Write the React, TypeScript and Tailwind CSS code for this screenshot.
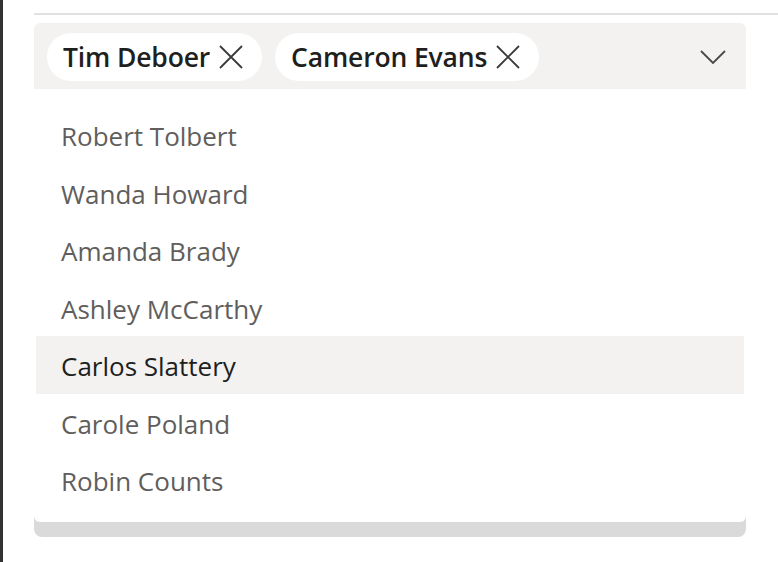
import React from "react";

const people = [
  "Robert Tolbert",
  "Wanda Howard",
  "Amanda Brady",
  "Ashley McCarthy",
  "Carlos Slattery",
  "Carole Poland",
  "Robin Counts",
];

const selected = ["Tim Deboer", "Cameron Evans"];

function CloseIcon() {
  return (
    <svg width="24" height="24" viewBox="0 0 24 24" className="shrink-0">
      <path d="M1 1 L23 23 M23 1 L1 23" stroke="#3b3a39" strokeWidth="1.8" fill="none" />
    </svg>
  );
}

function Chevron() {
  return (
    <svg width="26" height="14" viewBox="0 0 26 14">
      <path d="M1 1 L13 13 L25 1" stroke="#4a4948" strokeWidth="1.8" fill="none" />
    </svg>
  );
}

export default function App() {
  return (
    <div
      className="flex h-[562px] w-[778px] bg-white overflow-hidden"
      style={{ fontFamily: '"Open Sans", "Noto Sans", sans-serif' }}
    >
      {/* left edge of the host panel */}
      <div className="w-[3px] bg-[#323232] shrink-0" />

      <div className="flex-1 pl-[31px] pt-[13px] flex flex-col">
        <div className="h-[2px] bg-[#e1e1e1]" />

        {/* combo box with chips */}
        <div className="mt-[8px] w-[712px] h-[66px] bg-[#f3f2f1] rounded-t-[6px] flex items-center pl-[13px] pr-[20px] pt-[2px]">
          <div className="flex items-center gap-[13px] flex-1">
            {selected.map((name) => (
              <div
                key={name}
                className="h-[48px] bg-white rounded-full flex items-center pl-[16px] pr-[19px] gap-[9px]"
              >
                <span className="text-[26.5px] font-semibold text-[#201f1e] leading-none pt-[1px] tracking-[-0.15px]">
                  {name}
                </span>
                <CloseIcon />
              </div>
            ))}
          </div>
          <Chevron />
        </div>

        {/* options list */}
        <div className="w-[712px] bg-[#dadada] rounded-b-[8px] pb-[15px]">
          <div className="bg-white rounded-b-[6px] px-[2px] pt-[17px] pb-[13px]">
            {people.map((p) => {
              const active = p === "Carlos Slattery";
              return (
                <div
                  key={p}
                  className={
                    "h-[57.5px] flex items-center pl-[25px] pt-[4px] text-[26px] " +
                    (active ? "bg-[#f3f2f1] text-[#201f1e]" : "text-[#605e5c]")
                  }
                >
                  {p}
                </div>
              );
            })}
          </div>
        </div>
      </div>
    </div>
  );
}
